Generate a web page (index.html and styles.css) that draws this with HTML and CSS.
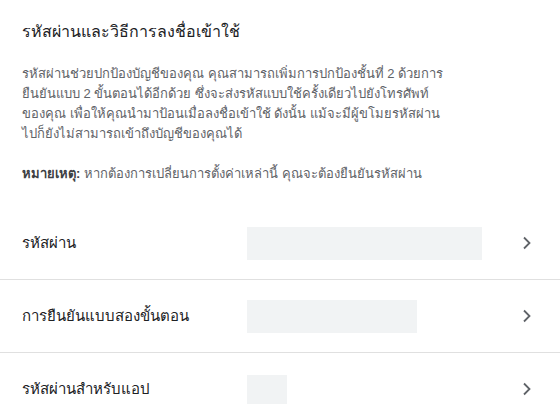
FILE: index.html
```html
<!DOCTYPE html>
<html lang="th">
<head>
  <meta charset="UTF-8" />
  <title>รหัสผ่านและวิธีการลงชื่อเข้าใช้</title>
  <link rel="stylesheet" href="styles.css">
</head>
<body>

<div class="card">
  <div class="intro">
    <h1>รหัสผ่านและวิธีการลงชื่อเข้าใช้</h1>
    <p>รหัสผ่านช่วยปกป้องบัญชีของคุณ คุณสามารถเพิ่มการปกป้องชั้นที่ 2 ด้วยการ<br>ยืนยันแบบ 2 ขั้นตอนได้อีกด้วย ซึ่งจะส่งรหัสแบบใช้ครั้งเดียวไปยังโทรศัพท์<br>ของคุณ เพื่อให้คุณนำมาป้อนเมื่อลงชื่อเข้าใช้ ดังนั้น แม้จะมีผู้ขโมยรหัสผ่าน<br>ไปก็ยังไม่สามารถเข้าถึงบัญชีของคุณได้</p>
    <p><b>หมายเหตุ:</b> หากต้องการเปลี่ยนการตั้งค่าเหล่านี้ คุณจะต้องยืนยันรหัสผ่าน</p>
  </div>

  <div class="row">
    <div class="label">รหัสผ่าน</div>
    <div class="value"><span class="blank w-long"></span></div>
    <svg class="chev" viewBox="0 0 24 24"><path d="M10 6.5 15.5 12 10 17.5"/></svg>
  </div>
  <div class="row">
    <div class="label">การยืนยันแบบสองขั้นตอน</div>
    <div class="value"><span class="blank w-mid"></span></div>
    <svg class="chev" viewBox="0 0 24 24"><path d="M10 6.5 15.5 12 10 17.5"/></svg>
  </div>
  <div class="row">
    <div class="label">รหัสผ่านสำหรับแอป</div>
    <div class="value"><span class="blank w-short"></span></div>
    <svg class="chev" viewBox="0 0 24 24"><path d="M10 6.5 15.5 12 10 17.5"/></svg>
  </div>
</div>

</body>
</html>
```

FILE: styles.css
```css
html, body {
  margin: 0; padding: 0;
  background: #fff;
  font-family: Arial, "Liberation Sans", "Noto Sans", sans-serif;
  overflow: hidden;
}

.intro {
  padding: 20px 22px 3px;
}

.intro h1 {
  margin: 0 0 20px;
  font-size: 16px;
  font-weight: normal;
  line-height: 24px;
  color: #202124;
}

.intro p {
  margin: 0 0 20px;
  font-size: 13px;
  line-height: 20px;
  color: #5f6368;
}

.intro p b { color: #3c4043; }

/* Rows */
.row {
  display: flex;
  align-items: center;
  height: 72px;
  padding: 0 22px;
  border-bottom: 1px solid #e0e0e0;
}
.row:last-child { border-bottom: none; }

.label {
  width: 225px;
  font-size: 15px;
  color: #202124;
}

.value { flex: 1; display: flex; }

.blank {
  display: block;
  height: 33px;
  background: #f1f3f4;
}
.w-long { width: 235px; }
.w-mid { width: 170px; }
.w-short { width: 40px; height: 29px; }

.chev {
  width: 24px; height: 24px;
  fill: none;
  stroke: #5f6368;
  stroke-width: 1.8;
}
```
